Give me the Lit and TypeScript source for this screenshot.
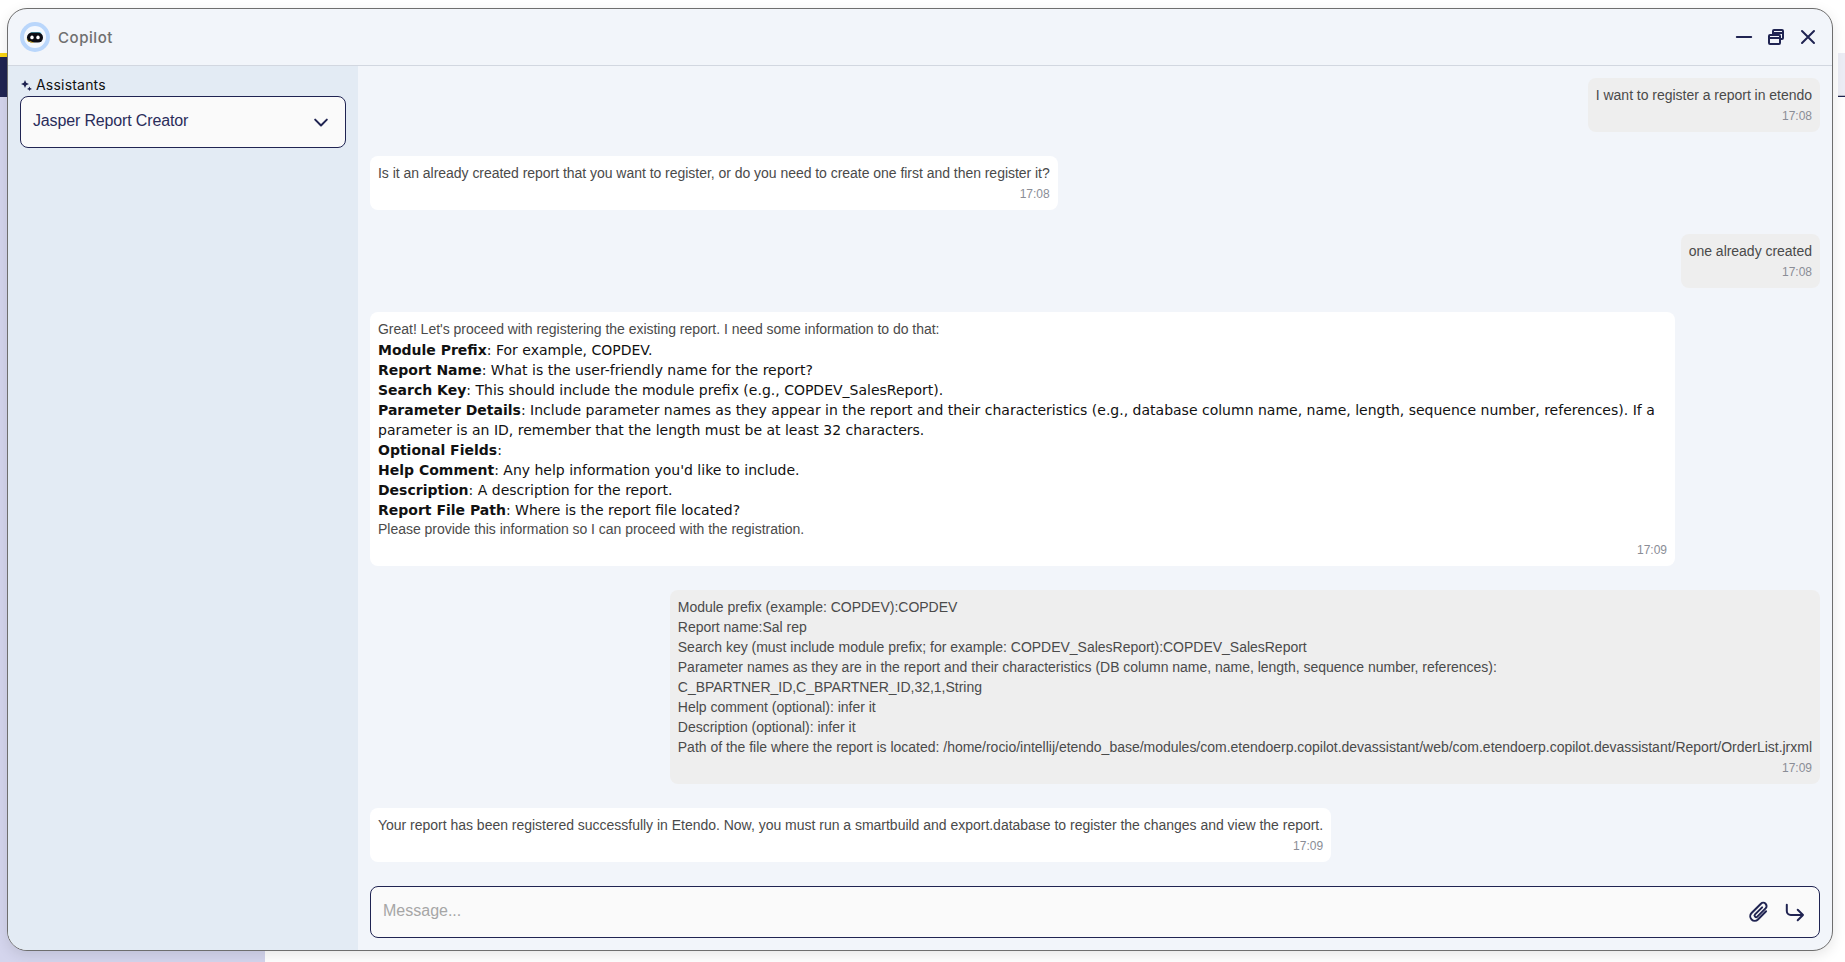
import { LitElement, html, css, svg } from "lit";
import { customElement } from "lit/decorators.js";

@customElement("app-root")
export class AppRoot extends LitElement {
  static styles = css`
    :host { display: block; position: relative; width: 1845px; height: 962px; overflow: hidden; background: #fff; font-family: "Liberation Sans", Arial, sans-serif; }
    .bg { display: grid; grid-template-columns: 265px 1fr 7px; grid-template-rows: 53px 4px 38px 2px 1fr; width: 100%; height: 100%; }
    .bg-yellow { grid-column: 1; grid-row: 2; background: #fad614; }
    .bg-navy { grid-column: 1; grid-row: 3 / 5; background: #202452; }
    .bg-side { grid-column: 1; grid-row: 5; background: #d4d5ed; }
    .bg-right { grid-column: 3; grid-row: 1 / 4; margin-top: 53px; background: #ecedf5; }
    .bg-rule { grid-column: 3; grid-row: 4; background: #202452; border-top: 1px solid #b9bac4; box-sizing: border-box; }
    .win { position: absolute; left: 7px; top: 8px; width: 1826px; height: 943px; box-sizing: border-box; border: 1px solid #6e6e6e; border-radius: 20px; background: #f2f5fa; overflow: hidden; display: flex; flex-direction: column; box-shadow: 0 4px 14px rgba(0,0,0,.1); }
    .head { height: 57px; flex: none; box-sizing: border-box; border-bottom: 1px solid #d2d7e0; display: flex; align-items: center; padding: 0 12px 0 12px; gap: 8px; }
    .logo { width: 30px; height: 30px; display: block; flex: none; }
    .title { font: 500 15px Inter, sans-serif; color: #6f6f6f; letter-spacing: .55px; flex: 1; }
    .ctl { display: flex; gap: 8px; }
    .ctl svg { width: 24px; height: 24px; display: block; }
    .body { flex: 1; display: flex; min-height: 0; }
    .side { width: 350px; flex: none; background: #e3ebf4; box-sizing: border-box; padding: 11px 12px 0 12px; }
    .lbl { display: flex; align-items: center; gap: 4px; font: 14px/16px Inter, sans-serif; letter-spacing: .2px; color: #111; height: 16px; margin-bottom: 3px; padding-left: 1px; }
    .lbl svg { width: 11px; height: 11px; }
    .sel { height: 52px; box-sizing: border-box; border: 1px solid #202452; border-radius: 8px; background: #fafafa; display: flex; align-items: flex-start; justify-content: space-between; padding: 14px 14px 0 12px; font-size: 16px; line-height: 20px; letter-spacing: -.15px; color: #2a2d5a; }
    .sel svg { width: 20px; height: 20px; margin-top: 2px; }
    .main { flex: 1; min-width: 0; display: flex; flex-direction: column; padding: 0 12px 12px 12px; }
    .msgs { flex: 1; display: flex; flex-direction: column; align-items: flex-start; gap: 24px; padding-top: 12px; }
    .m { box-sizing: border-box; padding: 7px 8px 9px 8px; border-radius: 8px; font-size: 14px; line-height: 20px; letter-spacing: -.025px; color: #4a4a4a; }
    .me { align-self: flex-end; background: #eeeeee; }
    .bot { background: #fff; }
    .tight { letter-spacing: -.033px; }
    .loose { letter-spacing: -.015px; }
    .wide { width: 1305px; }
    .t { text-align: right; font-size: 12px; line-height: 14px; letter-spacing: 0; color: #8a8d96; margin-top: 4px; }
    .rich { margin-top: 1px; font: 14px/20px "DejaVu Sans", sans-serif; letter-spacing: 0; color: #111; }
    .rich b { font-weight: 700; }
    .outro { line-height: 18px; padding-bottom: 1px; }
    .in { flex: none; height: 52px; box-sizing: border-box; border: 1px solid #202452; border-radius: 8px; background: #fafafa; display: flex; align-items: center; padding: 0 12px; }
    .ph { flex: 1; font-size: 16px; color: #a6a6a6; margin-top: -2px; }
    .ic { display: flex; gap: 12px; align-items: center; }
    .ic svg { width: 24px; height: 24px; display: block; }
  `;

  private stroke(d: unknown) {
    return html`<svg viewBox="0 0 24 24" fill="none" stroke="#202452" stroke-width="2" stroke-linecap="round" stroke-linejoin="round">${d}</svg>`;
  }

  render() {
    return html`
      <div class="bg"><div class="bg-yellow"></div><div class="bg-navy"></div><div class="bg-side"></div><div class="bg-right"></div><div class="bg-rule"></div></div>
      <div class="win">
        <div class="head">
          <svg class="logo" viewBox="0 0 30 30">
            <circle cx="15" cy="15" r="15" fill="#b9d6fb"/><circle cx="15" cy="15" r="11" fill="#f4f8fe"/>
            <path d="M9 20 q-2.5 -1 -2.2 -4 l1 1.5z" fill="#f5c518"/>
            <path d="M11 10.3 h8 q2 0 3 1 h-11z" fill="#35c8e8"/>
            <rect x="7" y="10.6" width="16" height="10" rx="5" fill="#0c0c14"/>
            <path d="M8 18.6 q2 2.4 6 2 l-3 -1z" fill="#f5c518"/>
            <ellipse cx="12" cy="15.4" rx="1.7" ry="1.9" fill="#fff"/><ellipse cx="18" cy="15.4" rx="1.7" ry="1.9" fill="#fff"/>
          </svg>
          <div class="title">Copilot</div>
          <div class="ctl">
            ${this.stroke(svg`<path d="M4.8 12h14.4"/>`)}
            ${this.stroke(svg`<rect x="5" y="10" width="11" height="9" rx="1"/><path d="M5 13h11M9 10V6a1 1 0 0 1 1-1h8a1 1 0 0 1 1 1v7a1 1 0 0 1-1 1h-2M9 8h10"/>`)}
            ${this.stroke(svg`<path d="M6 6l12 12M18 6L6 18"/>`)}
          </div>
        </div>
        <div class="body">
          <div class="side">
            <div class="lbl"><svg viewBox="0 0 11 11" fill="#202452"><path d="M4 0l1.2 2.8L8 4 5.2 5.2 4 8 2.8 5.2 0 4l2.8-1.2z"/><path d="M8.5 6.5l.7 1.6 1.8.9-1.8.7-.7 1.3-.7-1.3L6 9l1.8-.9z"/></svg>Assistants</div>
            <div class="sel">Jasper Report Creator
              <svg viewBox="0 0 24 24" fill="none" stroke="#202452" stroke-width="2.4" stroke-linecap="round" stroke-linejoin="round"><path d="M5 8l7 7 7-7"/></svg>
            </div>
          </div>
          <div class="main">
            <div class="msgs">
              <div class="m me">I want to register a report in etendo<div class="t">17:08</div></div>
              <div class="m bot tight">Is it an already created report that you want to register, or do you need to create one first and then register it?<div class="t">17:08</div></div>
              <div class="m me">one already created<div class="t">17:08</div></div>
              <div class="m bot wide">
                <div>Great! Let's proceed with registering the existing report. I need some information to do that:</div>
                <div class="rich">
                  <div><b>Module Prefix</b>: For example, COPDEV.</div>
                  <div><b>Report Name</b>: What is the user-friendly name for the report?</div>
                  <div><b>Search Key</b>: This should include the module prefix (e.g., COPDEV_SalesReport).</div>
                  <div><b>Parameter Details</b>: Include parameter names as they appear in the report and their characteristics (e.g., database column name, name, length, sequence number, references). If a parameter is an ID, remember that the length must be at least 32 characters.</div>
                  <div><b>Optional Fields</b>:</div>
                  <div><b>Help Comment</b>: Any help information you'd like to include.</div>
                  <div><b>Description</b>: A description for the report.</div>
                  <div><b>Report File Path</b>: Where is the report file located?</div>
                </div>
                <div class="outro">Please provide this information so I can proceed with the registration.</div>
                <div class="t">17:09</div></div>
              <div class="m me loose">
                <div>Module prefix (example: COPDEV):COPDEV</div>
                <div>Report name:Sal rep</div>
                <div>Search key (must include module prefix; for example: COPDEV_SalesReport):COPDEV_SalesReport</div>
                <div>Parameter names as they are in the report and their characteristics (DB column name, name, length, sequence number, references):</div>
                <div>C_BPARTNER_ID,C_BPARTNER_ID,32,1,String</div>
                <div>Help comment (optional): infer it</div>
                <div>Description (optional): infer it</div>
                <div>Path of the file where the report is located: /home/rocio/intellij/etendo_base/modules/com.etendoerp.copilot.devassistant/web/com.etendoerp.copilot.devassistant/Report/OrderList.jrxml</div>
                <div class="t">17:09</div></div>
              <div class="m bot loose">Your report has been registered successfully in Etendo. Now, you must run a smartbuild and export.database to register the changes and view the report.<div class="t">17:09</div></div>
            </div>
            <div class="in"><div class="ph">Message...</div>
              <div class="ic">
                ${this.stroke(svg`<path transform="rotate(45 12 12)" d="M16.5 6.5V18a4.5 4.5 0 0 1-9 0V4.8a3.3 3.3 0 0 1 6.6 0V16.5a1.6 1.6 0 0 1-3.2 0V6.5"/>`)}
                ${this.stroke(svg`<path d="M3.8 4.8V11a4 4 0 0 0 4 4H20M14.7 9.7L20 15l-5.3 5.3"/>`)}
              </div>
            </div>
          </div>
        </div>
      </div>`;
  }
}
